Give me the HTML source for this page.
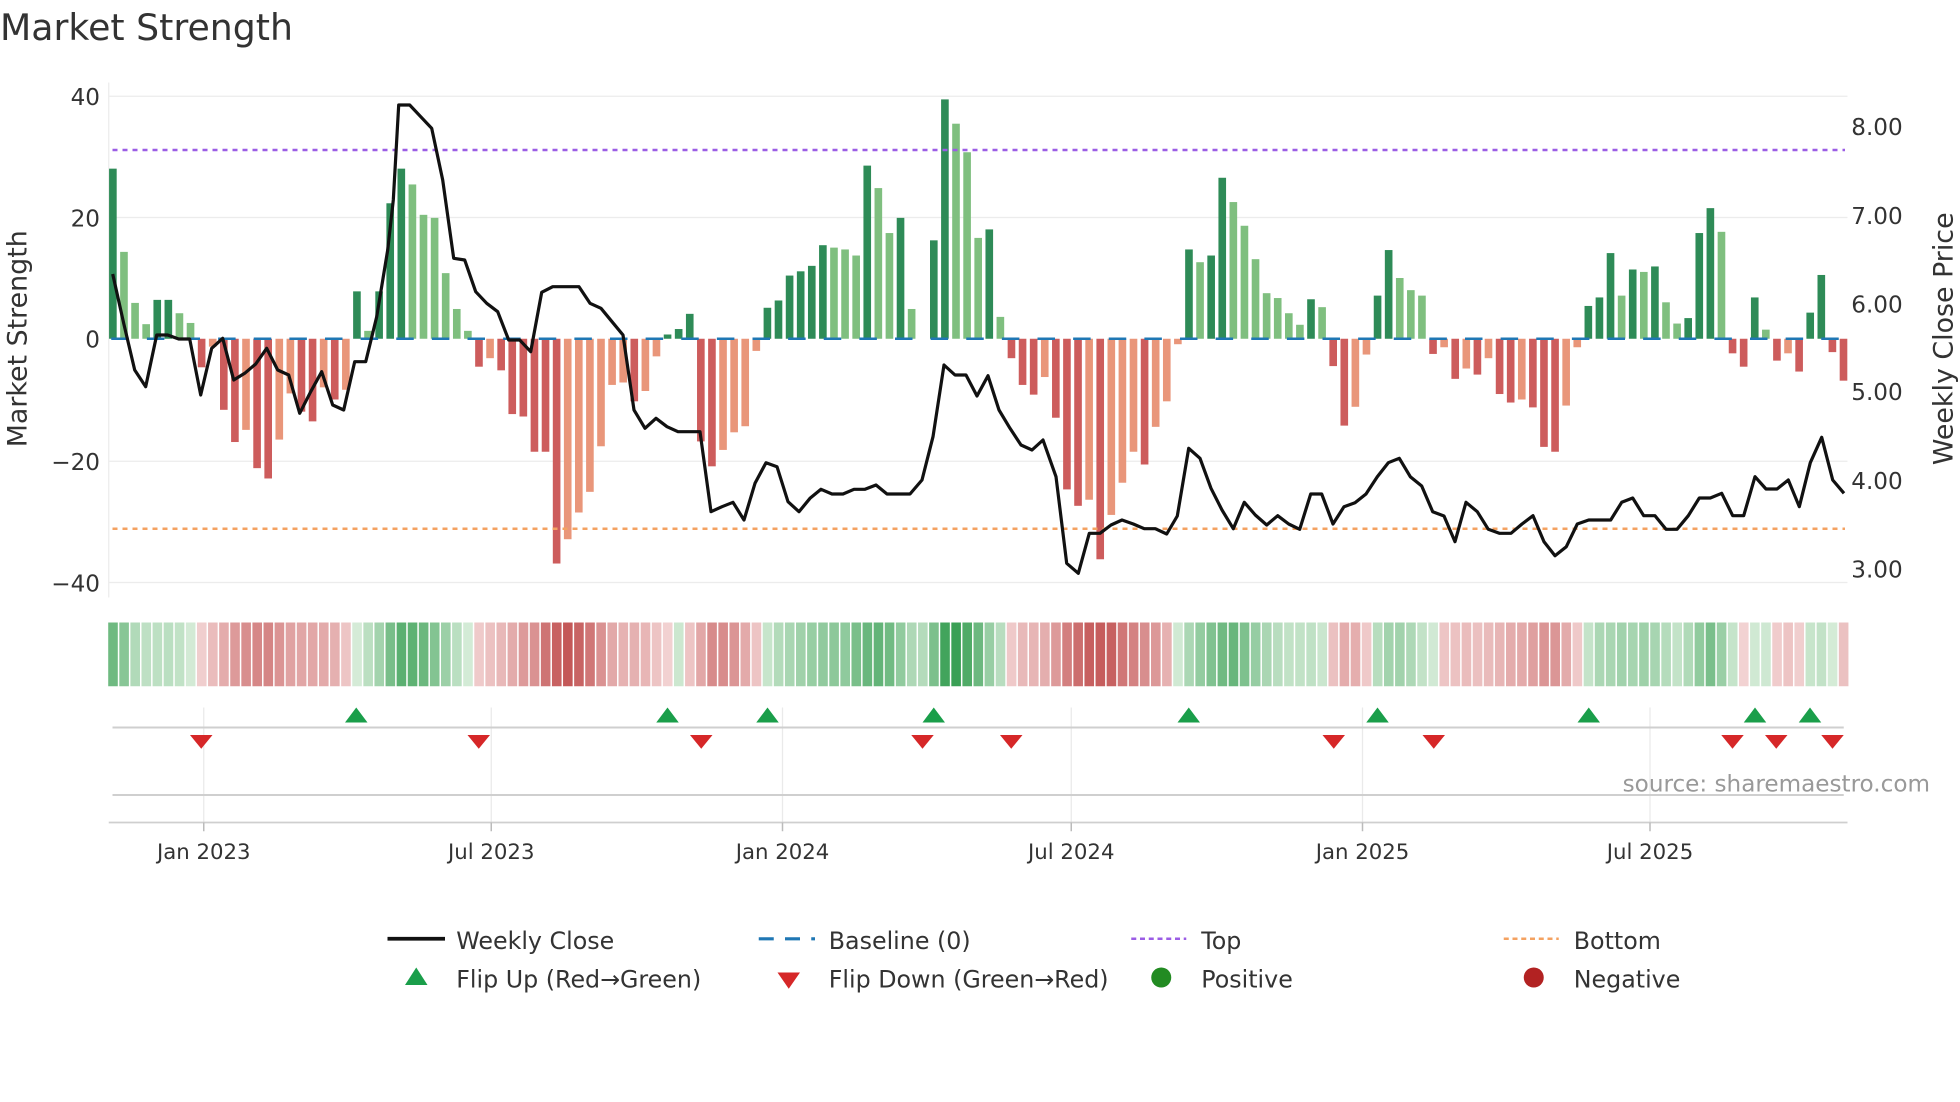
<!DOCTYPE html>
<html><head><meta charset="utf-8">
<style>
html,body{margin:0;padding:0;background:#fff;}
svg{display:block;}
text{font-family:"DejaVu Sans","Liberation Sans",sans-serif;fill:#333;}
</style></head>
<body>
<svg id="s" xmlns="http://www.w3.org/2000/svg" width="1960" height="1102" viewBox="0 0 1568 881.6">
<rect width="1568" height="881.6" fill="#fff"/>
<text x="0" y="32" font-size="29" fill="#333">Market Strength</text>

<g stroke="#ececec" stroke-width="1">
<line x1="87" y1="77" x2="1478" y2="77"/>
<line x1="87" y1="174" x2="1478" y2="174"/>
<line x1="87" y1="369" x2="1478" y2="369"/>
<line x1="87" y1="466" x2="1478" y2="466"/>
<line x1="87" y1="66" x2="87" y2="478"/>
</g>
<g font-size="18.5" text-anchor="end">
<text x="80" y="84">40</text>
<text x="80" y="181">20</text>
<text x="80" y="278">0</text>
<text x="80" y="376">−20</text>
<text x="80" y="473">−40</text>
</g>
<g font-size="18.5">
<text x="1481" y="108">8.00</text>
<text x="1481" y="179">7.00</text>
<text x="1481" y="250">6.00</text>
<text x="1481" y="320">5.00</text>
<text x="1481" y="391">4.00</text>
<text x="1481" y="462">3.00</text>
</g>
<text transform="translate(21,271) rotate(-90)" font-size="21.5" text-anchor="middle">Market Strength</text>
<text transform="translate(1562,271) rotate(-90)" font-size="21.5" text-anchor="middle">Weekly Close Price</text>

<g id="bars"></g>
<g id="base"></g>
<line x1="90" y1="120" x2="1476" y2="120" stroke="#9b5de5" stroke-width="2" stroke-dasharray="4,4"/>
<line x1="90" y1="423" x2="1476" y2="423" stroke="#f4a261" stroke-width="2" stroke-dasharray="4,4"/>

<g transform="scale(0.8)">
<polyline fill="none" stroke="#111" stroke-width="3.2" stroke-linejoin="round" points="112.7,274 123.7,323.3 134.7,370 145.7,386.7 156.7,335 167.7,335 178.7,339 189.7,339 200.7,395 211.7,348.3 222.7,338.3 233.7,380 244.7,373.3 255.7,364 266.7,348.3 277.7,370 288.7,375 299.7,413.3 310.7,391.7 321.7,371.7 332.7,405 343.7,410 354.7,361.7 365.7,361.7 376.7,316.7 387.7,250 393.3,200 398.7,105 409.7,105 420.7,116.7 431.7,128.3 442.7,180 453.7,258.3 464.7,260 475.7,291.7 486.7,303.3 497.7,311.7 508.7,340 519.7,340 530.7,351.7 541.7,292.3 552.7,286.7 574.7,286.7 579,286.7 590,303.3 601,308.3 612,321.7 623,335 634,410 645,428.3 656,418.3 667,426.7 678,431.7 700,431.7 711,511.7 722,506.7 733,502.3 744,520 755,483.3 766,462.7 777,466.7 788,501.7 799,511.7 810,498.3 821,489.3 832,494 843,494 854,489.3 865,489.3 876,485 887,494 910,494 922,480 933,436.7 944,365 955,375 966,375 977,396 988,375.7 999,410 1010,428.3 1021,445 1032,450 1043,440 1056,476.7 1066.7,563.3 1078.3,573.3 1089.3,533.3 1100,533.3 1111,525 1122,520 1133.3,524 1144.3,528.7 1155.3,528.7 1166.7,534 1177.3,516 1188.7,448.3 1200,458.3 1211,488.3 1222,510 1233.3,528.7 1244.3,502.3 1255.3,515 1266.7,525 1277.7,515.7 1288.7,524 1299.7,529.3 1310.7,494 1321.7,494 1333,524 1344,506.7 1355,502.7 1366,494 1377.3,476.7 1388.3,462.7 1399.3,458.3 1410.3,476.7 1421.7,486 1432.7,511.7 1444,516 1455,541.7 1466,502.3 1477.3,511.7 1488.3,529.3 1499.3,533.3 1511,533.3 1522,524 1533,515.7 1544,541.7 1555,555.7 1566.3,546.7 1577.3,524 1588.7,520 1610.7,520 1621.7,502.3 1632.7,498 1643.7,515.7 1655,515.7 1666,529.3 1677,529.3 1688.3,515.7 1699.3,498 1710.3,498 1721.7,493.3 1732.7,515.7 1743.7,515.7 1755,476.7 1766,489 1777,489 1788.3,480 1799.3,506.7 1810.3,462.7 1821.7,437.3 1832.7,480 1844,493.3"/>
</g>

<g id="heat"></g>

<g stroke="#eaeaea" stroke-width="1">
<line x1="163" y1="566" x2="163" y2="658"/><line x1="393" y1="566" x2="393" y2="658"/>
<line x1="626" y1="566" x2="626" y2="658"/><line x1="857" y1="566" x2="857" y2="658"/>
<line x1="1090" y1="566" x2="1090" y2="658"/><line x1="1320" y1="566" x2="1320" y2="658"/>
</g>
<line x1="90" y1="582" x2="1475" y2="582" stroke="#cfcfcf" stroke-width="1.6"/>
<line x1="90" y1="636" x2="1475" y2="636" stroke="#cfcfcf" stroke-width="1.6"/>
<line x1="87" y1="658" x2="1478" y2="658" stroke="#cfcfcf" stroke-width="1.4"/>
<g stroke="#bbb" stroke-width="1.2">
<line x1="163" y1="658" x2="163" y2="665"/><line x1="393" y1="658" x2="393" y2="665"/>
<line x1="626" y1="658" x2="626" y2="665"/><line x1="857" y1="658" x2="857" y2="665"/>
<line x1="1090" y1="658" x2="1090" y2="665"/><line x1="1320" y1="658" x2="1320" y2="665"/>
</g>
<g id="tri"></g>
<text x="1544" y="633" font-size="18.5" text-anchor="end" style="fill:#999">source: sharemaestro.com</text>
<g font-size="17" text-anchor="middle">
<text x="163" y="687">Jan 2023</text><text x="393" y="687">Jul 2023</text>
<text x="626" y="687">Jan 2024</text><text x="857" y="687">Jul 2024</text>
<text x="1090" y="687">Jan 2025</text><text x="1320" y="687">Jul 2025</text>
</g>

<g font-size="19">
<line x1="310" y1="751" x2="356" y2="751" stroke="#111" stroke-width="3"/>
<text x="365" y="759">Weekly Close</text>
<line x1="607" y1="751" x2="652" y2="751" stroke="#1f77b4" stroke-width="2.5" stroke-dasharray="12,9"/>
<text x="663" y="759">Baseline (0)</text>
<line x1="905" y1="751" x2="949" y2="751" stroke="#9b5de5" stroke-width="2" stroke-dasharray="4,3"/>
<text x="961" y="759">Top</text>
<line x1="1203" y1="751" x2="1247" y2="751" stroke="#f4a261" stroke-width="2" stroke-dasharray="4,3"/>
<text x="1259" y="759">Bottom</text>
<polygon points="324,788 342,788 333,774" fill="#1a9e4a"/>
<text x="365" y="790">Flip Up (Red→Green)</text>
<polygon points="622,778 640,778 631,791" fill="#d62728"/>
<text x="663" y="790">Flip Down (Green→Red)</text>
<circle cx="929" cy="782" r="8" fill="#228b22"/>
<text x="961" y="790">Positive</text>
<circle cx="1227" cy="782" r="8" fill="#b22222"/>
<text x="1259" y="790">Negative</text>
</g>
</svg>
<script>
(function(){
var NS="http://www.w3.org/2000/svg";
var raw="28d,14.3l,5.9l,2.4l,6.4d,6.4d,4.2l,2.6l,-4.7d,-1.3l,-11.7d,-17d,-15l,-21.3d,-23d,-16.6l,-9l,-12d,-13.6d,-8l,-10d,-8.4l,7.8d,1.3l,7.8d,22.3d,28d,25.4l,20.4l,19.9l,10.8l,4.9l,1.3l,-4.6d,-3.2l,-5.2d,-12.4d,-12.8d,-18.6d,-18.6d,-37d,-33l,-28.6l,-25.2l,-17.7l,-7.6l,-7.2l,-10.3d,-8.6l,-2.9l,0.7d,1.6d,4.1d,-16.9d,-21d,-18.3l,-15.4l,-14.4l,-2l,5.1d,6.3d,10.4d,11.1d,12d,15.4d,15l,14.7l,13.7l,28.5d,24.8l,17.4l,19.9d,4.9l,0d,16.2d,39.4d,35.4l,30.7l,16.6l,18d,3.6l,-3.2d,-7.6d,-9.2d,-6.3l,-13d,-24.8d,-27.5d,-26.5l,-36.3d,-29l,-23.7l,-18.6l,-20.7d,-14.5l,-10.3l,-0.9l,14.7d,12.6l,13.7d,26.5d,22.5l,18.6l,13.1l,7.5l,6.7l,4.2l,2.3l,6.5d,5.2l,-4.5d,-14.3d,-11.2l,-2.6l,7.1d,14.6d,10l,8l,7.1l,-2.5d,-1.4l,-6.6d,-4.9l,-5.9d,-3.2l,-9.1d,-10.5d,-10l,-11.3d,-17.8d,-18.6d,-11l,-1.4l,5.4d,6.8d,14.1d,7.1l,11.4d,11l,11.9d,6l,2.5l,3.4d,17.4d,21.5d,17.6l,-2.4d,-4.6d,6.8d,1.5l,-3.6d,-2.4l,-5.4d,4.3d,10.5d,-2.2d,-6.9d";
var items=raw.split(",");var vals=[],sh=[];
items.forEach(function(s){vals.push(parseFloat(s));sh.push(s.slice(-1));});
var x0=90.3,st=8.875,w=6.1,zy=271,k=4.86;
var bars=document.getElementById("bars"),heat=document.getElementById("heat"),base=document.getElementById("base");
function r(g,x,y,ww,h,f){var e=document.createElementNS(NS,"rect");e.setAttribute("x",x);e.setAttribute("y",y);e.setAttribute("width",ww);e.setAttribute("height",h);e.setAttribute("fill",f);g.appendChild(e);}
function mix(a,b,t){var c=[];for(var i=0;i<3;i++)c.push(Math.round(a[i]+(b[i]-a[i])*t));return "rgb("+c.join(",")+")";}
for(var i=0;i<vals.length;i++){
 var v=vals[i],x=x0+i*st;
 if(v>0){r(bars,x-w/2,zy-v*k,w,v*k,sh[i]=="d"?"#2e8b57":"#7fbf7f");}
 else if(v<0){r(bars,x-w/2,zy,w,-v*k,sh[i]=="d"?"#cd5c5c":"#e9967a");}
 var a=0,n=0;for(var j=i-1;j<=i+1;j++){if(j>=0&&j<vals.length){a+=vals[j];n++;}}a/=n;
 var t=Math.min(1,Math.abs(a)/32);
 var col=a>=0?mix([214,236,216],[58,160,85],t):mix([242,210,210],[196,88,88],t);
 r(heat,x-st/2+0.7,498,st-1.2,51,col);
}
for(var xx=89;xx<1476;xx+=28.5){r(base,xx,270,14,2,"#1f77b4");}
var tri=document.getElementById("tri");
function p(pts,f){var e=document.createElementNS(NS,"polygon");e.setAttribute("points",pts);e.setAttribute("fill",f);tri.appendChild(e);}
[285,534,614,747,951,1102,1271,1404,1448].forEach(function(x){p((x-9)+",578 "+(x+9)+",578 "+x+",566","#1a9e4a");});
[161,383,561,738,809,1067,1147,1386,1421,1466].forEach(function(x){p((x-9)+",588 "+(x+9)+",588 "+x+",599","#d62728");});
})();
</script>
</body></html>
